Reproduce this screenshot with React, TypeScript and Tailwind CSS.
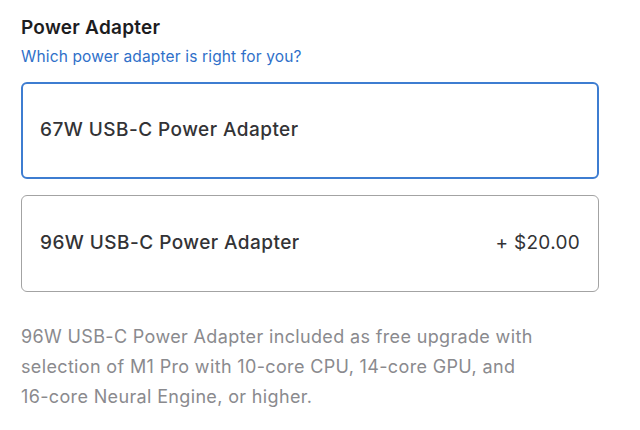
export default function App() {
  return (
    <div className="w-[640px] h-[430px] bg-white overflow-hidden pl-[21px] pr-[41px] pt-[16px]" style={{ fontFamily: "Inter, 'Noto Sans', sans-serif" }}>
      <h2 className="text-[19px] leading-[24px] font-semibold tracking-[0.25px] text-[#1d1d1f]">Power Adapter</h2>
      <a className="block mt-[7px] text-[15.5px] leading-[20px] tracking-[0.15px] text-[#2f70c9]">Which power adapter is right for you?</a>
      <div className="mt-[15px] flex flex-col gap-[16px]">
        <div className="h-[97px] rounded-[6px] border-2 border-[#3e7dd1] flex items-center px-[17px]">
          <span className="text-[19px] font-medium tracking-[0.45px] text-[#333336]">67W USB-C Power Adapter</span>
        </div>
        <div className="h-[97px] rounded-[6px] border border-[#a3a3a3] flex items-center justify-between px-[18px]">
          <span className="text-[19px] font-medium tracking-[0.45px] text-[#333336]">96W USB-C Power Adapter</span>
          <span className="text-[19px] tracking-[0.3px] text-[#333336]">+ $20.00</span>
        </div>
      </div>
      <p className="mt-[30px] w-[530px] text-[18px] leading-[30px] tracking-[0.35px] text-[#8a8a8e]">
        96W USB-C Power Adapter included as free upgrade with selection of M1 Pro with 10-core CPU, 14-core GPU, and <span className="whitespace-nowrap">16-core</span> Neural Engine, or higher.
      </p>
    </div>
  );
}
